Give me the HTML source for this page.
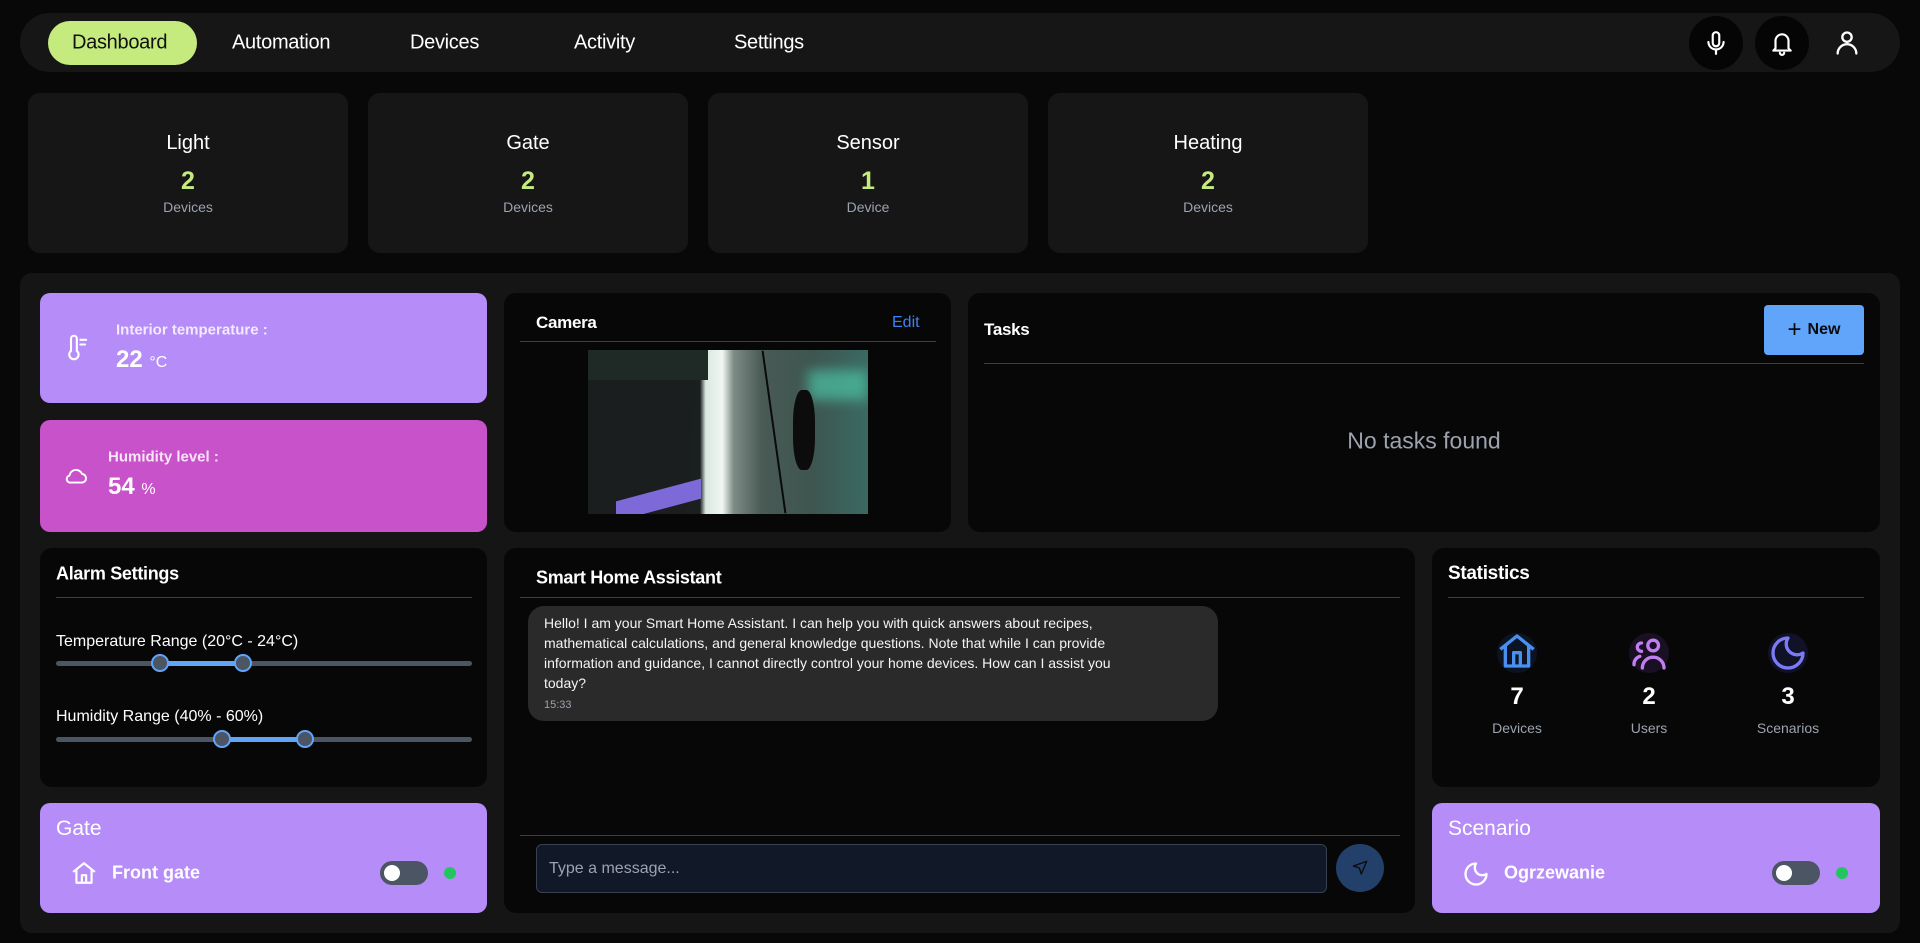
<!DOCTYPE html>
<html><head><meta charset="utf-8"><style>
*{box-sizing:border-box;margin:0;padding:0}
body{width:1920px;height:943px;background:#080808;font-family:"Liberation Sans",sans-serif;color:#fff;position:relative;overflow:hidden}
.a{position:absolute}
.nav{left:20px;top:13px;width:1880px;height:59px;background:#161616;border-radius:30px}
.ni{position:absolute;top:43px;transform:translateY(-50%);font-size:20px;color:#fff;letter-spacing:-0.3px}
.pill{left:48px;top:21px;width:149px;height:44px;background:#c5ea7d;border-radius:22px}
.ic{width:54px;height:54px;border-radius:50%;background:#050505;top:16px;display:flex;align-items:center;justify-content:center}
.sc{top:93px;width:320px;height:160px;background:#161616;border-radius:12px;text-align:center}
.sc .t{position:absolute;left:0;right:0;top:131px}
.panel{left:20px;top:273px;width:1880px;height:660px;background:#151515;border-radius:12px}
.card{background:#070707;border-radius:12px}
.ttl{font-size:18px;font-weight:bold;letter-spacing:-0.3px}
.div{height:1px;background:#374151}
.c{transform:translateY(-50%)}
.track{height:5px;background:#4b5563;border-radius:3px}
.thumb{width:18px;height:18px;border-radius:50%;background:#4b5563;border:2px solid #60a5fa}
.tog{width:48px;height:24px;border-radius:12px;background:#4b5563}
.tog:after{content:"";position:absolute;left:4px;top:4px;width:16px;height:16px;border-radius:50%;background:#fff}
.dot{width:12px;height:12px;border-radius:50%;background:#22c55e}
</style></head><body>

<div class="a nav"></div>
<div class="a pill"></div>
<div class="ni" style="left:72px;color:#111">Dashboard</div>
<div class="ni" style="left:232px">Automation</div>
<div class="ni" style="left:410px">Devices</div>
<div class="ni" style="left:574px">Activity</div>
<div class="ni" style="left:734px">Settings</div>
<div class="a ic" style="left:1689px"><svg width="26" height="28" viewBox="0 0 24 24" fill="none" stroke="#fff" stroke-width="2" stroke-linecap="round"><rect x="9" y="2" width="6" height="13" rx="3"/><path d="M5 11a7 7 0 0 0 14 0M12 18v4"/></svg></div>
<div class="a ic" style="left:1755px"><svg width="26" height="28" viewBox="0 0 24 24" fill="none" stroke="#fff" stroke-width="2" stroke-linecap="round" stroke-linejoin="round"><path d="M6 17V10a6 6 0 0 1 12 0v7l2 2H4z"/><path d="M10 21a2 2 0 0 0 4 0"/></svg></div>
<div class="a" style="left:1833px;top:29px"><svg width="28" height="28" viewBox="0 0 24 24" fill="none" stroke="#fff" stroke-width="2" stroke-linecap="round"><circle cx="12" cy="7" r="4"/><path d="M4 21a8 8 0 0 1 16 0"/></svg></div>

<div class="a sc" style="left:28px"><div class="a" style="left:0;right:0;top:131px"></div></div>
<div class="a sc" style="left:368px"></div>
<div class="a sc" style="left:708px"></div>
<div class="a sc" style="left:1048px"></div>
<div class="a" style="left:28px;top:131px;width:1340px;height:0"></div>
<div class="a" style="left:28px;top:132px;width:320px;text-align:center;font-size:20px">Light</div>
<div class="a" style="left:368px;top:132px;width:320px;text-align:center;font-size:20px">Gate</div>
<div class="a" style="left:708px;top:132px;width:320px;text-align:center;font-size:20px">Sensor</div>
<div class="a" style="left:1048px;top:132px;width:320px;text-align:center;font-size:20px">Heating</div>
<div class="a" style="left:28px;top:167px;width:320px;text-align:center;font-size:25px;font-weight:bold;color:#c5ea7d">2</div>
<div class="a" style="left:368px;top:167px;width:320px;text-align:center;font-size:25px;font-weight:bold;color:#c5ea7d">2</div>
<div class="a" style="left:708px;top:167px;width:320px;text-align:center;font-size:25px;font-weight:bold;color:#c5ea7d">1</div>
<div class="a" style="left:1048px;top:167px;width:320px;text-align:center;font-size:25px;font-weight:bold;color:#c5ea7d">2</div>
<div class="a" style="left:28px;top:199px;width:320px;text-align:center;font-size:14px;color:#9ca3af">Devices</div>
<div class="a" style="left:368px;top:199px;width:320px;text-align:center;font-size:14px;color:#9ca3af">Devices</div>
<div class="a" style="left:708px;top:199px;width:320px;text-align:center;font-size:14px;color:#9ca3af">Device</div>
<div class="a" style="left:1048px;top:199px;width:320px;text-align:center;font-size:14px;color:#9ca3af">Devices</div>

<div class="a panel"></div>

<!-- temp -->
<div class="a" style="left:40px;top:293px;width:447px;height:110px;background:#b68cf8;border-radius:10px"></div>
<div class="a" style="left:64px;top:333px"><svg width="28" height="30" viewBox="0 0 24 24" fill="none" stroke="#fff" stroke-width="1.8" stroke-linecap="round"><path d="M6 14.5V4a2.5 2.5 0 0 1 5 0v10.5a4 4 0 1 1-5 0z"/><path d="M14 5h5M14 9h4"/></svg></div>
<div class="a c" style="left:116px;top:330px;font-size:15px;font-weight:bold;color:#f3eaff">Interior temperature :</div>
<div class="a c" style="left:116px;top:360px;font-size:24px;font-weight:bold">22 <span style="font-size:16px;font-weight:normal">°C</span></div>
<!-- humidity -->
<div class="a" style="left:40px;top:420px;width:447px;height:112px;background:#c752c9;border-radius:10px"></div>
<div class="a" style="left:62px;top:462px"><svg width="28" height="26" viewBox="0 0 24 24" fill="none" stroke="#fff" stroke-width="1.8" stroke-linejoin="round"><path d="M7 19h10a4 4 0 0 0 .5-8 6 6 0 0 0-11.5 1.5A3.3 3.3 0 0 0 7 19z"/></svg></div>
<div class="a c" style="left:108px;top:457px;font-size:15px;font-weight:bold;color:#f8e6f8">Humidity level :</div>
<div class="a c" style="left:108px;top:487px;font-size:24px;font-weight:bold">54 <span style="font-size:16px;font-weight:normal">%</span></div>

<!-- camera -->
<div class="a card" style="left:504px;top:293px;width:447px;height:239px"></div>
<div class="a c ttl" style="left:536px;top:323px;font-size:17px">Camera</div>
<div class="a c" style="left:892px;top:323px;font-size:16px;color:#3b82f6">Edit</div>
<div class="a div" style="left:520px;top:341px;width:416px"></div>
<div class="a" style="left:588px;top:350px;width:280px;height:164px;overflow:hidden;background:linear-gradient(90deg,#1a1d1c 0%,#1c1f1f 40%,#d8e8e0 42%,#f2f6f2 48%,#7d8c85 52%,#4a5a55 62%,#3e5550 80%,#3a6a62 100%)">
 <div class="a" style="left:0;top:0;width:110px;height:164px;background:#1b1e1f;transform:skewX(-4deg);transform-origin:top left"></div>
 <div class="a" style="left:0;top:0;width:120px;height:30px;background:#1f2a26"></div>
 <div class="a" style="left:28px;top:140px;width:85px;height:20px;background:#7d6ad8;transform:skewY(-15deg)"></div>
 <div class="a" style="left:220px;top:20px;width:60px;height:30px;background:#4fd4b0;opacity:.6;filter:blur(6px)"></div>
 <div class="a" style="left:205px;top:40px;width:22px;height:80px;background:#0c0c0c;border-radius:40%"></div>
 <div class="a" style="left:185px;top:0;width:2px;height:164px;background:#0a0a0a;transform:rotate(-8deg)"></div>
</div>

<!-- tasks -->
<div class="a card" style="left:968px;top:293px;width:912px;height:239px"></div>
<div class="a c ttl" style="left:984px;top:330px;font-size:17px">Tasks</div>
<div class="a" style="left:1764px;top:305px;width:100px;height:50px;background:#60a5fa;border-radius:4px;display:flex;align-items:center;justify-content:center;color:#0a0a0a;font-size:16px;font-weight:bold"><span style="font-size:24px;font-weight:normal;margin-right:6px;line-height:1">+</span>New</div>
<div class="a div" style="left:984px;top:363px;width:880px"></div>
<div class="a c" style="left:968px;top:441px;width:912px;text-align:center;font-size:23px;color:#9ca3af">No tasks found</div>

<!-- alarm -->
<div class="a card" style="left:40px;top:548px;width:447px;height:239px"></div>
<div class="a c ttl" style="left:56px;top:574px">Alarm Settings</div>
<div class="a div" style="left:56px;top:597px;width:416px"></div>
<div class="a c" style="left:56px;top:642px;font-size:16px">Temperature Range (20°C - 24°C)</div>
<div class="a track" style="left:56px;top:661px;width:416px"></div>
<div class="a" style="left:160px;top:661px;width:83px;height:5px;background:#60a5fa"></div>
<div class="a thumb" style="left:151px;top:654px"></div>
<div class="a thumb" style="left:234px;top:654px"></div>
<div class="a c" style="left:56px;top:717px;font-size:16px">Humidity Range (40% - 60%)</div>
<div class="a track" style="left:56px;top:737px;width:416px"></div>
<div class="a" style="left:222px;top:737px;width:83px;height:5px;background:#60a5fa"></div>
<div class="a thumb" style="left:213px;top:730px"></div>
<div class="a thumb" style="left:296px;top:730px"></div>

<!-- gate -->
<div class="a" style="left:40px;top:803px;width:447px;height:110px;background:#b68cf8;border-radius:10px"></div>
<div class="a c" style="left:56px;top:829px;font-size:21px">Gate</div>
<div class="a" style="left:71px;top:860px"><svg width="26" height="26" viewBox="0 0 24 24" fill="none" stroke="#fff" stroke-width="2" stroke-linejoin="round"><path d="M2 11L12 3l10 8M5 9v12h14V9M10 21v-7h4v7"/></svg></div>
<div class="a c" style="left:112px;top:873px;font-size:18px;font-weight:bold">Front gate</div>
<div class="a tog" style="left:380px;top:861px"></div>
<div class="a dot" style="left:444px;top:867px"></div>

<!-- assistant -->
<div class="a card" style="left:504px;top:548px;width:911px;height:365px"></div>
<div class="a c ttl" style="left:536px;top:578px">Smart Home Assistant</div>
<div class="a div" style="left:520px;top:597px;width:880px"></div>
<div class="a" style="left:528px;top:606px;width:690px;height:115px;background:#2a2a2a;border-radius:16px"></div>
<div class="a" style="left:544px;top:613px;font-size:14px;line-height:20px;color:#f3f4f6;white-space:nowrap">Hello! I am your Smart Home Assistant. I can help you with quick answers about recipes,<br>mathematical calculations, and general knowledge questions. Note that while I can provide<br>information and guidance, I cannot directly control your home devices. How can I assist you<br>today?</div>
<div class="a c" style="left:544px;top:705px;font-size:11px;color:#9ca3af">15:33</div>
<div class="a div" style="left:520px;top:835px;width:880px"></div>
<div class="a" style="left:536px;top:844px;width:791px;height:49px;background:#111827;border:1px solid #374151;border-radius:6px"></div>
<div class="a c" style="left:549px;top:869px;font-size:16px;color:#9ca3af">Type a message...</div>
<div class="a" style="left:1336px;top:844px;width:48px;height:48px;border-radius:50%;background:#22406a;display:flex;align-items:center;justify-content:center"><svg width="16" height="16" viewBox="0 0 24 24" fill="none" stroke="#0b0b0b" stroke-width="2" stroke-linejoin="round"><path d="M22 2L2 9l9 3 3 9z"/></svg></div>

<!-- statistics -->
<div class="a card" style="left:1432px;top:548px;width:448px;height:239px"></div>
<div class="a c ttl" style="left:1448px;top:574px;font-size:19px">Statistics</div>
<div class="a div" style="left:1448px;top:597px;width:416px"></div>
<div class="a" style="left:1497px;top:633px;width:40px;height:40px;border-radius:50%;background:#0c1424"></div>
<div class="a" style="left:1497px;top:631px"><svg width="40" height="40" viewBox="0 0 24 24" fill="none" stroke="#4a90f0" stroke-width="2" stroke-linejoin="round"><path d="M2 11L12 3l10 8M5 9v12h14V9M10 21v-8h4v8"/></svg></div>
<div class="a" style="left:1629px;top:633px;width:40px;height:40px;border-radius:50%;background:#1a1024"></div>
<div class="a" style="left:1629px;top:633px"><svg width="40" height="40" viewBox="0 0 24 24" fill="none" stroke="#c07ef0" stroke-width="2" stroke-linecap="round"><circle cx="14.5" cy="7.5" r="3.2"/><path d="M8 21a6.5 6.5 0 0 1 13 0"/><path d="M7.5 6a2.5 2.5 0 0 0 0 5M3 19a5 5 0 0 1 3.5-5"/></svg></div>
<div class="a" style="left:1768px;top:633px;width:40px;height:40px;border-radius:50%;background:#111128"></div>
<div class="a" style="left:1768px;top:633px"><svg width="40" height="40" viewBox="0 0 24 24" fill="none" stroke="#7b7cf5" stroke-width="2" stroke-linejoin="round"><path d="M12 3a6.5 6.5 0 0 0 9 9 9 9 0 1 1-9-9z"/></svg></div>
<div class="a c" style="left:1477px;top:697px;width:80px;text-align:center;font-size:24px;font-weight:bold">7</div>
<div class="a c" style="left:1609px;top:697px;width:80px;text-align:center;font-size:24px;font-weight:bold">2</div>
<div class="a c" style="left:1748px;top:697px;width:80px;text-align:center;font-size:24px;font-weight:bold">3</div>
<div class="a c" style="left:1467px;top:728px;width:100px;text-align:center;font-size:14px;color:#9ca3af">Devices</div>
<div class="a c" style="left:1599px;top:728px;width:100px;text-align:center;font-size:14px;color:#9ca3af">Users</div>
<div class="a c" style="left:1738px;top:728px;width:100px;text-align:center;font-size:14px;color:#9ca3af">Scenarios</div>

<!-- scenario -->
<div class="a" style="left:1432px;top:803px;width:448px;height:110px;background:#b68cf8;border-radius:10px"></div>
<div class="a c" style="left:1448px;top:829px;font-size:21px">Scenario</div>
<div class="a" style="left:1462px;top:860px"><svg width="28" height="28" viewBox="0 0 24 24" fill="none" stroke="#fff" stroke-width="2" stroke-linejoin="round"><path d="M12 3a6.5 6.5 0 0 0 9 9 9 9 0 1 1-9-9z"/></svg></div>
<div class="a c" style="left:1504px;top:873px;font-size:18px;font-weight:bold">Ogrzewanie</div>
<div class="a tog" style="left:1772px;top:861px"></div>
<div class="a dot" style="left:1836px;top:867px"></div>
</body></html>
